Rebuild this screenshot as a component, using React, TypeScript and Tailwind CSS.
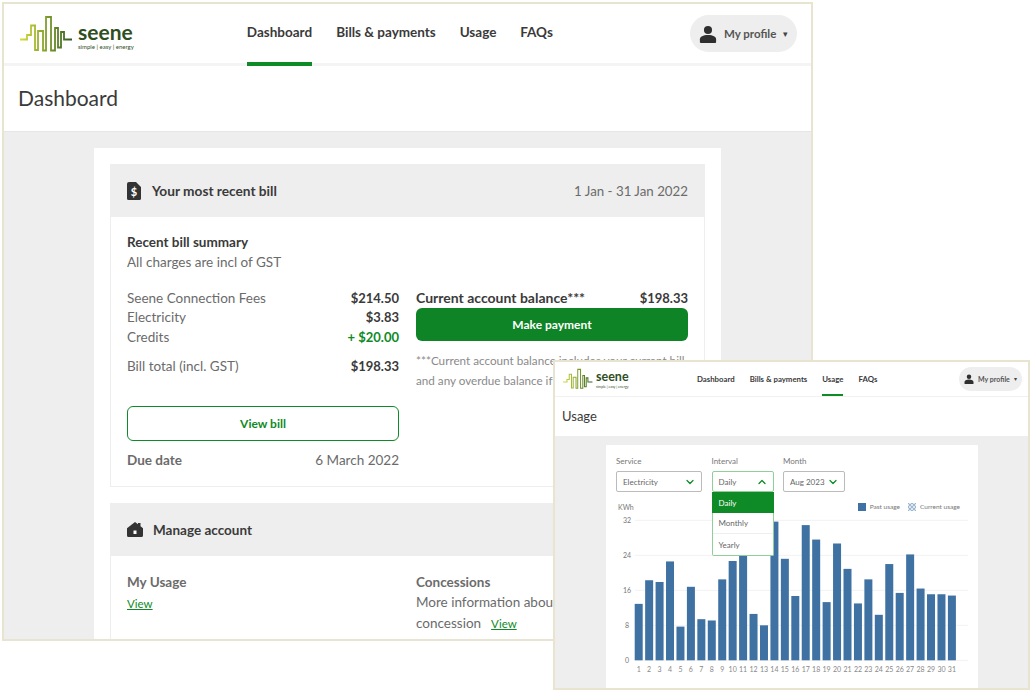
import { ChevronDown, ChevronUp } from 'lucide-react'

const usage = [
  12.9, 18.3, 17.9, 22.6, 7.7, 16.8, 9.4, 9.1, 18.5, 22.7, 24.8, 10.6, 8.0, 31.7, 23.2, 14.7, 30.9, 27.6, 13.3, 26.7,
  20.9, 13.0, 18.5, 10.4, 22.0, 15.4, 24.2, 16.4, 15.1, 15.1, 14.8,
]

function Wave({ className }: { className: string }) {
  return (
    <svg viewBox="20 14 53 38" className={className} fill="none">
      <defs>
        <linearGradient id="wave" x1="0" y1="0" x2="1" y2="0">
          <stop offset="0" stopColor="#d8de3a" />
          <stop offset="0.45" stopColor="#8aa52c" />
          <stop offset="1" stopColor="#2f5a24" />
        </linearGradient>
      </defs>
      <path
        d="M20 38.5H27V34H31V24.5H35V49H38V30H43V49.5H46V16H51V49.5H55V27H58V46.5H61V31H64V38.5H72"
        stroke="url(#wave)"
        strokeWidth="1.8"
      />
    </svg>
  )
}

function Person({ className }: { className: string }) {
  return (
    <svg viewBox="0 0 20 20" className={className} fill="#2f2f2f">
      <circle cx="10" cy="5.5" r="4.5" />
      <path d="M1 19v-3.2C1 12.8 4.5 11 10 11s9 1.8 9 4.8V19a1 1 0 0 1-1 1H2a1 1 0 0 1-1-1z" />
    </svg>
  )
}

function BillIcon() {
  return (
    <svg viewBox="0 0 14 18" className="w-[14px] h-[18px]">
      <path d="M2 0h7l5 5v11.5a1.5 1.5 0 0 1-1.5 1.5h-11A1.5 1.5 0 0 1 0 16.500V2a2 2 0 0 1 2-2z" fill="#333" />
      <text x="7" y="13.500" textAnchor="middle" fontSize="11" fontWeight="700" fill="#fff">
        $
      </text>
    </svg>
  )
}

function HomeIcon() {
  return (
    <svg viewBox="0 0 16 15" className="w-[16px] h-[15px]">
      <path d="M8 0l3 2.300V1h2.500v3.200L16 6.200V13.500a1.500 1.500 0 0 1-1.500 1.500h-13A1.500 1.500 0 0 1 0 13.500V6.200z" fill="#333" />
      <rect x="6.500" y="8.500" width="3" height="3.500" fill="#fff" />
    </svg>
  )
}

function SummaryRow({ label, value, green }: { label: string; value: string; green?: boolean }) {
  return (
    <div className="flex justify-between h-[19.5px] items-center">
      <span className="text-[#6b6b6b]">{label}</span>
      <span className={green ? 'font-bold text-[13px] text-[#0e8a26]' : 'font-bold text-[13px] text-[#3a3a3a]'}>{value}</span>
    </div>
  )
}

function UsageChart() {
  return (
    <svg viewBox="606 515 372 165" className="block w-[372px] h-[165px]">
      {[32, 24, 16, 8, 0].map((tick) => {
        const y = 660.3 - tick * 4.375
        return (
          <g key={tick}>
            <line x1="635" x2="968" y1={y} y2={y} stroke="#f2f2f2" />
            <text x="627" y={y + 2.500} textAnchor="middle" fontSize="7" fill="#777">
              {tick}
            </text>
          </g>
        )
      })}
      {usage.map((v, i) => {
        const x = 634.7 + i * 10.44
        return (
          <g key={i}>
            <rect x={x} y={660.3 - v * 4.375} width="8" height={v * 4.375} fill="#3f72a2" />
            <text x={x + 4} y="672" textAnchor="middle" fontSize="7" fill="#888">
              {i + 1}
            </text>
          </g>
        )
      })}
    </svg>
  )
}

function Select({ value, width, open }: { value: string; width: string; open?: boolean }) {
  return (
    <div
      className={`${width} h-[21px] flex items-center justify-between pl-[6px] pr-[5px] bg-white rounded-[2px] border ${
        open ? 'border-[#8fd09a]' : 'border-[#bbbbbb]'
      }`}
    >
      <span className="text-[#666]">{value}</span>
      {open ? (
        <ChevronUp className="w-[12px] h-[12px] text-[#0e8a26]" strokeWidth={2.500} />
      ) : (
        <ChevronDown className="w-[12px] h-[12px] text-[#0e8a26]" strokeWidth={2.500} />
      )}
    </div>
  )
}

function UsageWindow() {
  return (
    <div className="absolute left-[553px] top-[360px] w-[477px] h-[330px] border-2 border-[#e8e4d0] bg-white overflow-hidden flex flex-col">
      <div className="h-[35px] shrink-0 flex items-stretch border-b border-[#f1f1f1] pl-[8px]">
        <div className="flex items-center w-[134px] gap-[3px]">
          <Wave className="w-[30px] h-[22px]" />
          <div className="pt-[2px]">
            <div className="text-[12.500px] font-bold text-[#2f4f1f] leading-[12px]">seene</div>
            <div className="text-[3.500px] text-[#2f4f1f] leading-[4px] mt-[2px] whitespace-nowrap">simple | easy | energy</div>
          </div>
        </div>
        <nav className="flex gap-[15px] text-[7.800px] font-bold text-[#3a3a3a] whitespace-nowrap">
          <span className="flex items-center">Dashboard</span>
          <span className="flex items-center">Bills &amp; payments</span>
          <span className="flex items-center border-b-[2px] border-[#0e8a26] pt-[2px]">Usage</span>
          <span className="flex items-center">FAQs</span>
        </nav>
        <div className="ml-auto mr-[6px] my-[5px] w-[63px] rounded-full bg-[#eeeeee] flex items-center pl-[5px] gap-[4px]">
          <Person className="w-[10px] h-[10px]" />
          <span className="text-[7px] font-bold text-[#555]">My profile</span>
          <span className="text-[6px] text-[#444]">▾</span>
        </div>
      </div>
      <div className="h-[39px] shrink-0 flex items-center pl-[7px] pb-[2px] text-[13px] text-[#3a3a3a]">Usage</div>
      <div className="flex-1 bg-[#eeeeee] pl-[51px] pt-[9px] min-h-0">
        <div className="relative w-[372px] h-[260px] bg-white pt-[11px] text-[8px]">
          <div className="flex mx-[10px] gap-[9.500px]">
            <div className="w-[86px]">
              <div className="text-[#777] leading-[10px] mb-[5px]">Service</div>
              <Select value="Electricity" width="w-[86px]" />
            </div>
            <div className="w-[62px]">
              <div className="text-[#777] leading-[10px] mb-[5px]">Interval</div>
              <Select value="Daily" width="w-[62px]" open />
            </div>
            <div className="w-[62px]">
              <div className="text-[#777] leading-[10px] mb-[5px]">Month</div>
              <Select value="Aug 2023" width="w-[62px]" />
            </div>
          </div>
          <div className="absolute z-10 left-[105.500px] top-[47px] w-[62px] bg-white border border-t-0 border-[#8fd09a] rounded-b-[2px] text-[#666]">
            <div className="h-[21px] -mx-px px-[7px] flex items-center bg-[#0e8a26] text-white">Daily</div>
            <div className="h-[21px] px-[6px] flex items-center border-b border-[#eeeeee]">Monthly</div>
            <div className="h-[21px] px-[6px] flex items-center">Yearly</div>
          </div>
          <div className="flex items-center justify-between mx-[10px] mt-[10px] h-[10px] text-[6.500px] text-[#777]">
            <span className="ml-[2px] text-[7px]">KWh</span>
            <div className="flex items-center mr-[8px]">
              <span className="w-[8px] h-[8px] bg-[#3f72a2] mr-[4px]" />
              <span>Past usage</span>
              <svg viewBox="0 0 8 8" className="w-[8px] h-[8px] ml-[8px] mr-[4px]">
                <rect width="8" height="8" fill="#dfe8f1" />
                <path d="M0 0l8 8M8 0L0 8M0 4l4 4M4 0l4 4M4 0L0 4M8 4L4 8" stroke="#6f96ba" strokeWidth="0.600" />
              </svg>
              <span>Current usage</span>
            </div>
          </div>
          <div className="mt-[3px]">
            <UsageChart />
          </div>
        </div>
      </div>
    </div>
  )
}

export default function App() {
  return (
    <div className="relative w-[1035px] h-[695px] overflow-hidden bg-white [font-family:Lato,'Open_Sans',sans-serif] text-[13.500px] leading-[20px]">
      <div className="ml-[2px] mt-[2px] w-[811px] h-[639px] border-2 border-[#e8e4d0] bg-white overflow-hidden flex flex-col">
        <header className="h-[62px] shrink-0 flex items-stretch border-b-[3px] border-[#f4f4f4] pl-[16px]">
          <div className="flex items-center w-[227px] gap-[5px]">
            <Wave className="w-[53px] h-[38px]" />
            <div className="pt-[5px]">
              <div className="text-[21px] font-bold text-[#2f4f1f] leading-[20px]">seene</div>
              <div className="text-[6px] text-[#2f4f1f] leading-[6px] mt-[2px] whitespace-nowrap">simple | easy | energy</div>
            </div>
          </div>
          <nav className="flex gap-[25px] text-[13.500px] font-bold text-[#3a3a3a] -mb-[3px] whitespace-nowrap">
            <span className="flex items-center border-b-4 border-[#0e8a26] pb-[2px] w-[65px] justify-center">Dashboard</span>
            <span className="flex items-center pb-[6px] w-[98px] justify-center">Bills &amp; payments</span>
            <span className="flex items-center pb-[6px] w-[36px] justify-center">Usage</span>
            <span className="flex items-center pb-[6px] w-[31px] justify-center">FAQs</span>
          </nav>
          <div className="ml-auto mr-[14px] my-[11px] w-[107px] rounded-full bg-[#eeeeee] flex items-center pl-[9px] gap-[7px]">
            <Person className="w-[18px] h-[18px]" />
            <span className="text-[11.500px] font-bold text-[#555]">My profile</span>
            <span className="text-[9px] text-[#444]">▾</span>
          </div>
        </header>

        <div className="h-[65px] shrink-0 flex items-center pl-[14px] pb-[2px] text-[21px] text-[#3a3a3a]">Dashboard</div>

        <main className="flex-1 min-h-0 bg-[#eeeeee] pl-[90px] pt-[16px] border-t border-[#e6e6e6]">
          <div className="w-[627px] h-[500px] bg-white px-[16px] pt-[16px]">
            <div className="h-[53px] bg-[#eeeeee] flex items-center justify-between px-[17px]">
              <div className="flex items-center gap-[11px] font-bold text-[13.700px] text-[#3a3a3a]">
                <BillIcon />
                <span>Your most recent bill</span>
              </div>
              <span className="text-[13.300px] text-[#6b6b6b]">1 Jan - 31 Jan 2022</span>
            </div>
            <div className="border border-t-0 border-[#eeeeee] px-[16px] pt-[15px] pb-[16px]">
              <div className="font-bold text-[#3a3a3a]">Recent bill summary</div>
              <div className="text-[#6b6b6b]">All charges are incl of GST</div>
              <div className="grid grid-cols-2 gap-[17px] mt-[16px]">
                <div>
                  <SummaryRow label="Seene Connection Fees" value="$214.50" />
                  <SummaryRow label="Electricity" value="$3.83" />
                  <SummaryRow label="Credits" value="+ $20.00" green />
                  <div className="mt-[10px]">
                    <SummaryRow label="Bill total (incl. GST)" value="$198.33" />
                  </div>
                  <button className="mt-[30px] w-full h-[35px] border border-[#0e8a26] rounded-[6px] text-[#0e8a26] font-bold text-[12px]">
                    View bill
                  </button>
                  <div className="flex justify-between mt-[9px]">
                    <span className="font-bold text-[#6b6b6b]">Due date</span>
                    <span className="text-[#6b6b6b]">6 March 2022</span>
                  </div>
                </div>
                <div>
                  <div className="flex justify-between font-bold text-[14px] text-[#3a3a3a]">
                    <span>Current account balance***</span>
                    <span className="text-[13px]">$198.33</span>
                  </div>
                  <button className="w-full h-[33px] bg-[#0e8426] rounded-[6px] text-white font-bold text-[12px]">
                    Make payment
                  </button>
                  <p className="mt-[9px] text-[11.700px] text-[#8a8a8a] whitespace-nowrap">
                    ***Current account balance includes your current bill
                    <br />
                    and any overdue balance if applicable
                  </p>
                </div>
              </div>
            </div>

            <div className="mt-[16px] h-[53px] bg-[#eeeeee] flex items-center gap-[10px] px-[17px] font-bold text-[#3a3a3a]">
              <HomeIcon />
              <span>Manage account</span>
            </div>
            <div className="border-x border-[#eeeeee] px-[16px] pt-[16px] pb-[10px] grid grid-cols-2 gap-[17px] text-[#6b6b6b]">
              <div>
                <div className="font-bold">My Usage</div>
                <a className="block mt-[2px] text-[11.500px] text-[#0e8a26] underline">View</a>
              </div>
              <div>
                <div className="font-bold">Concessions</div>
                <div className="whitespace-nowrap">More information about concessions</div>
                <div className="mt-[1px]">
                  concession
                  <a className="ml-[10px] text-[11.500px] text-[#0e8a26] underline">View</a>
                </div>
              </div>
            </div>
          </div>
        </main>
      </div>

      <UsageWindow />
    </div>
  )
}
